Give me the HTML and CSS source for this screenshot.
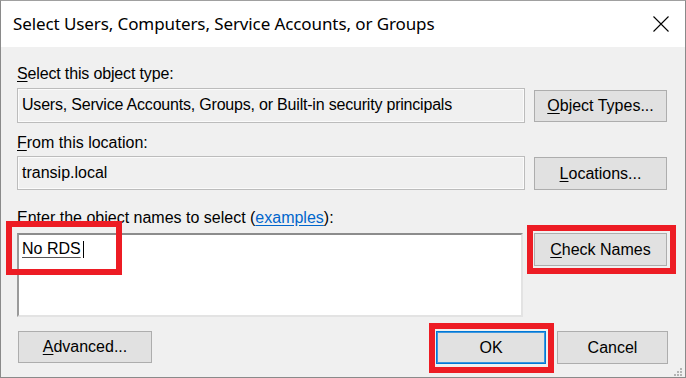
FILE: index.html
```html
<!DOCTYPE html>
<html>
<head>
<meta charset="utf-8">
<link rel="stylesheet" href="styles.css">
</head>
<body>
<div class="dialog">
  <div class="titlebar">
    <span class="title">Select Users, Computers, Service Accounts, or Groups</span>
    <svg class="close" width="16" height="16" viewBox="0 0 16 16"><path d="M0.5 0.5 L15.5 15.5 M15.5 0.5 L0.5 15.5" stroke="#000" stroke-width="1.1" fill="none"/></svg>
  </div>
  <div class="body">
    <div class="label l1"><u>S</u>elect this object type:</div>
    <div class="row r1">
      <div class="field f1">Users, Service Accounts, Groups, or Built-in security principals</div>
      <button class="btn b1"><u>O</u>bject Types...</button>
    </div>
    <div class="label l2"><u>F</u>rom this location:</div>
    <div class="row r2">
      <div class="field f2">transip.local</div>
      <button class="btn b2"><u>L</u>ocations...</button>
    </div>
    <div class="label l3"><u>E</u>nter the object names to select (<a class="link">examples</a>):</div>
    <div class="row r3">
      <div class="textarea"><span class="typed">No RDS</span><span class="caret"></span></div>
      <button class="btn b3"><u>C</u>heck Names</button>
    </div>
    <div class="footer">
      <button class="btn adv"><u>A</u>dvanced...</button>
      <button class="btn ok">OK</button>
      <button class="btn cancel">Cancel</button>
    </div>
  </div>
  <div class="mark m1"></div>
  <div class="mark m2"></div>
  <div class="mark m3"></div>
  <svg class="grip" width="12" height="8" viewBox="0 0 12 8">
    <rect x="9" y="0" width="2" height="2" fill="#b4b4b4"/>
    <rect x="6" y="3" width="2" height="2" fill="#b4b4b4"/>
    <rect x="9" y="3" width="2" height="2" fill="#b4b4b4"/>
    <rect x="3" y="6" width="2" height="2" fill="#b4b4b4"/>
    <rect x="6" y="6" width="2" height="2" fill="#b4b4b4"/>
    <rect x="9" y="6" width="2" height="2" fill="#b4b4b4"/>
  </svg>
</div>
</body>
</html>
```
FILE: styles.css
```css
* { box-sizing: border-box; }
html, body { margin: 0; padding: 0; background: #f0f0f0; }
.dialog {
  position: relative;
  width: 686px;
  height: 378px;
  background: #f0f0f0;
  border: 1px solid #8a8a8a;
  border-top-color: #a0a0a0;
  display: flex;
  flex-direction: column;
  font-family: "Liberation Sans", Arial, sans-serif;
  font-size: 16px;
  color: #000;
}
.titlebar {
  height: 46px;
  background: #fff;
  display: flex;
  align-items: center;
  padding: 0 16px 0 12px;
  flex: none;
}
.title {
  font-family: "Noto Sans", "Open Sans", sans-serif;
  font-size: 17px;
  flex: 1;
  padding-bottom: 1px;
  letter-spacing: -0.1px;
}
.close { display: block; }
.body {
  flex: 1;
  display: flex;
  flex-direction: column;
  padding: 0 18px 0 16px;
}
.label { line-height: 20px; height: 20px; white-space: nowrap; }
.l1 { margin-top: 17px; letter-spacing: -0.15px; }
.l2 { margin-top: 10px; }
.l3 { margin-top: 18px; }
u { text-decoration: underline; text-underline-offset: 2px; }
.link { color: #0066cc; text-decoration: underline; text-underline-offset: 2px; }
.row {
  display: grid;
  grid-template-columns: 508px 133px;
  column-gap: 9px;
  align-items: start;
}
.r1 { margin-top: 4px; }
.r2 { margin-top: 3px; }
.r3 { margin-top: 5px; }
.field {
  height: 35px;
  border: 1px solid #bcbcbc;
  box-shadow: inset 0 0 0 1px #fbfbfb;
  background: #f0f0f0;
  padding-left: 4px;
  line-height: 32px;
  white-space: nowrap;
  overflow: hidden;
}
.f1 { letter-spacing: -0.2px; }
.f2 { height: 34px; }
.btn {
  font-family: "Liberation Sans", Arial, sans-serif;
  font-size: 16px;
  color: #000;
  background: #e1e1e1;
  border: 1px solid #adadad;
  padding: 0;
  margin: 0;
  height: 33px;
  line-height: 30px;
  text-align: center;
}
.b1 { margin-top: 2px; height: 32px; }
.b2 { margin-top: 1px; }
.textarea {
  height: 84px;
  width: 506px;
  background: #fff;
  border-top: 2px solid #8c8c8c;
  border-left: 2px solid #9a9a9a;
  border-right: 2px solid #e3e3e3;
  border-bottom: 2px solid #e3e3e3;
  padding: 3px 0 0 3px;
  line-height: 22px;
  display: flex;
  align-items: flex-start;
}
.typed {
  text-decoration: underline;
  text-decoration-color: #555;
  text-underline-offset: 3px;
}
.caret {
  display: inline-block;
  width: 1px;
  height: 17px;
  background: #000;
  margin-left: 2px;
  margin-top: 3px;
}
.footer {
  display: flex;
  margin-top: 14px;
}
.adv { width: 134px; height: 32px; margin-left: 1px; }
.ok {
  width: 110px;
  margin-left: auto;
  border: 1px solid #0078d7;
  box-shadow: inset 0 0 0 1px #3c95dd;
}
.cancel { width: 111px; margin-left: 11px; margin-right: -1px; }
.mark {
  position: absolute;
  border: 6px solid #ed1c24;
}
.m1 { left: 5px; top: 220px; width: 116px; height: 54px; }
.m2 { left: 526px; top: 224px; width: 149px; height: 49px; }
.m3 { left: 428px; top: 322px; width: 125px; height: 50px; }
.grip { position: absolute; right: 2px; bottom: 1px; }
```
